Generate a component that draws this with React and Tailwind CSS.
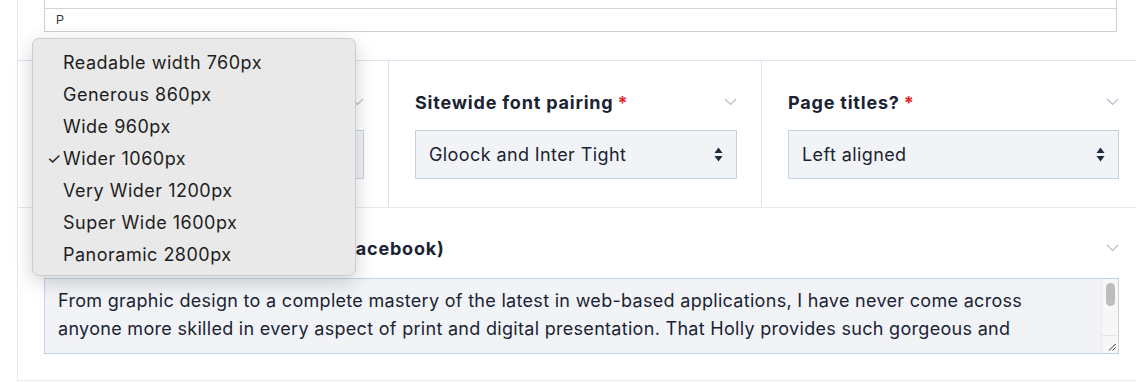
import React from 'react';

const Chevron = () => (
  <svg width="13" height="8" viewBox="0 0 13 8" fill="none" className="shrink-0">
    <path d="M1 1l5.5 5.5L12 1" stroke="#b6bec9" strokeWidth="1.2" />
  </svg>
);

const UpDown = () => (
  <svg width="9" height="15" viewBox="0 0 9 15" className="shrink-0">
    <path d="M4.5 0.5L8.5 6H0.5z" fill="#1e293b" />
    <path d="M4.5 14.5L8.5 9H0.5z" fill="#1e293b" />
  </svg>
);

const Label = ({ children, required }) => (
  <div className="flex items-center justify-between h-6">
    <span className="text-[18px] font-bold text-[#1a2333] tracking-[0.8px]">
      {children}
      {required && <span className="text-[#e3262b] ml-1">*</span>}
    </span>
    <Chevron />
  </div>
);

const Select = ({ value }) => (
  <div className="mt-[16px] h-[49px] flex items-center justify-between pl-[13px] pr-[13px] bg-[#f1f3f7] border border-[#c5d2e3] text-[18px] tracking-[0.4px] text-[#1a2333]">
    <span>{value}</span>
    <UpDown />
  </div>
);

const options = [
  'Readable width 760px',
  'Generous 860px',
  'Wide 960px',
  'Wider 1060px',
  'Very Wider 1200px',
  'Super Wide 1600px',
  'Panoramic 2800px',
];

export default function App() {
  return (
    <div className="relative w-[1136px] h-[382px] overflow-hidden bg-white" style={{ fontFamily: 'Inter, "Noto Sans", sans-serif' }}>
      <div className="ml-[17px] w-[1126px] h-[381px] border-l border-b border-[#e4e9f1] flex flex-col">
        {/* editor tail */}
        <div className="h-[61px] px-[26px] border-b border-[#dbe3ef]">
          <div className="border-x border-b border-[#cfcfcf]">
            <div className="h-[9px] border-b border-[#d4d4d4]" />
            <div className="h-[22px] flex items-center pl-[11px] text-[12px] text-[#333]" style={{ fontFamily: '"Liberation Sans", Arial, sans-serif' }}>
              P
            </div>
          </div>
        </div>

        {/* row of selects */}
        <div className="grid grid-cols-[371px_373px_1fr] h-[147px] border-b border-[#e4e9f1]">
          <div className="pt-[29px] pl-[26px] pr-[24px] border-r border-[#dbe3ef]">
            <Label required>Page width</Label>
            <Select value="Wider 1060px" />
          </div>
          <div className="pt-[29px] pl-[26px] pr-[24px] border-r border-[#dbe3ef]">
            <Label required>Sitewide font pairing</Label>
            <Select value="Gloock and Inter Tight" />
          </div>
          <div className="pt-[29px] pl-[26px] pr-[24px]">
            <Label required>Page titles?</Label>
            <Select value="Left aligned" />
          </div>
        </div>

        {/* testimonial */}
        <div className="pt-[28px] pl-[26px] pr-[24px]">
          <Label>Featured testimonial text (from Facebook)</Label>
          <div className="mt-[18px] h-[76px] flex bg-[#f1f3f7] border border-[#c5d2e3] overflow-hidden">
            <div className="flex-1 pl-[13px] pr-[8px] pt-[8px]">
              <div className="h-[56px] overflow-hidden text-[18px] leading-[28px] tracking-[0.3px] text-[#1a2333]">
                <div className="whitespace-nowrap">From graphic design to a complete mastery of the latest in web-based applications, I have never come across</div>
                <div className="whitespace-nowrap">anyone more skilled in every aspect of print and digital presentation. That Holly provides such gorgeous and</div>
              </div>
            </div>
            <div className="w-[17px] flex flex-col bg-[#f7f7f7] border-l border-[#ececec]">
              <div className="flex-1 pt-[4px] flex justify-center">
                <div className="w-[9px] h-[23px] rounded-full bg-[#bdbdbd]" />
              </div>
              <div className="h-[18px] border-t border-[#e6e6e6] flex items-end justify-end pr-[2px] pb-[2px]">
                <svg width="8" height="8" viewBox="0 0 8 8">
                  <path d="M1 7.5L7.5 1M4.5 7.5L7.5 4.5" stroke="#333" strokeWidth="1" />
                </svg>
              </div>
            </div>
          </div>
        </div>
      </div>

      {/* open select menu */}
      <div className="absolute left-[32px] top-[38px] w-[324px] h-[238px] rounded-[7px] bg-[#e9e9e9] border border-[#cdcdcd] shadow-[0_6px_20px_rgba(0,0,0,0.18)] pt-[7px]">
        {options.map((o) => (
          <div key={o} className="h-[32px] flex items-center text-[18px] tracking-[0.5px] text-[#1d1d1d]">
            <span className="w-[30px] pl-[14px] text-[16px]">{o === 'Wider 1060px' ? '✓' : ''}</span>
            <span>{o}</span>
          </div>
        ))}
      </div>
    </div>
  );
}
